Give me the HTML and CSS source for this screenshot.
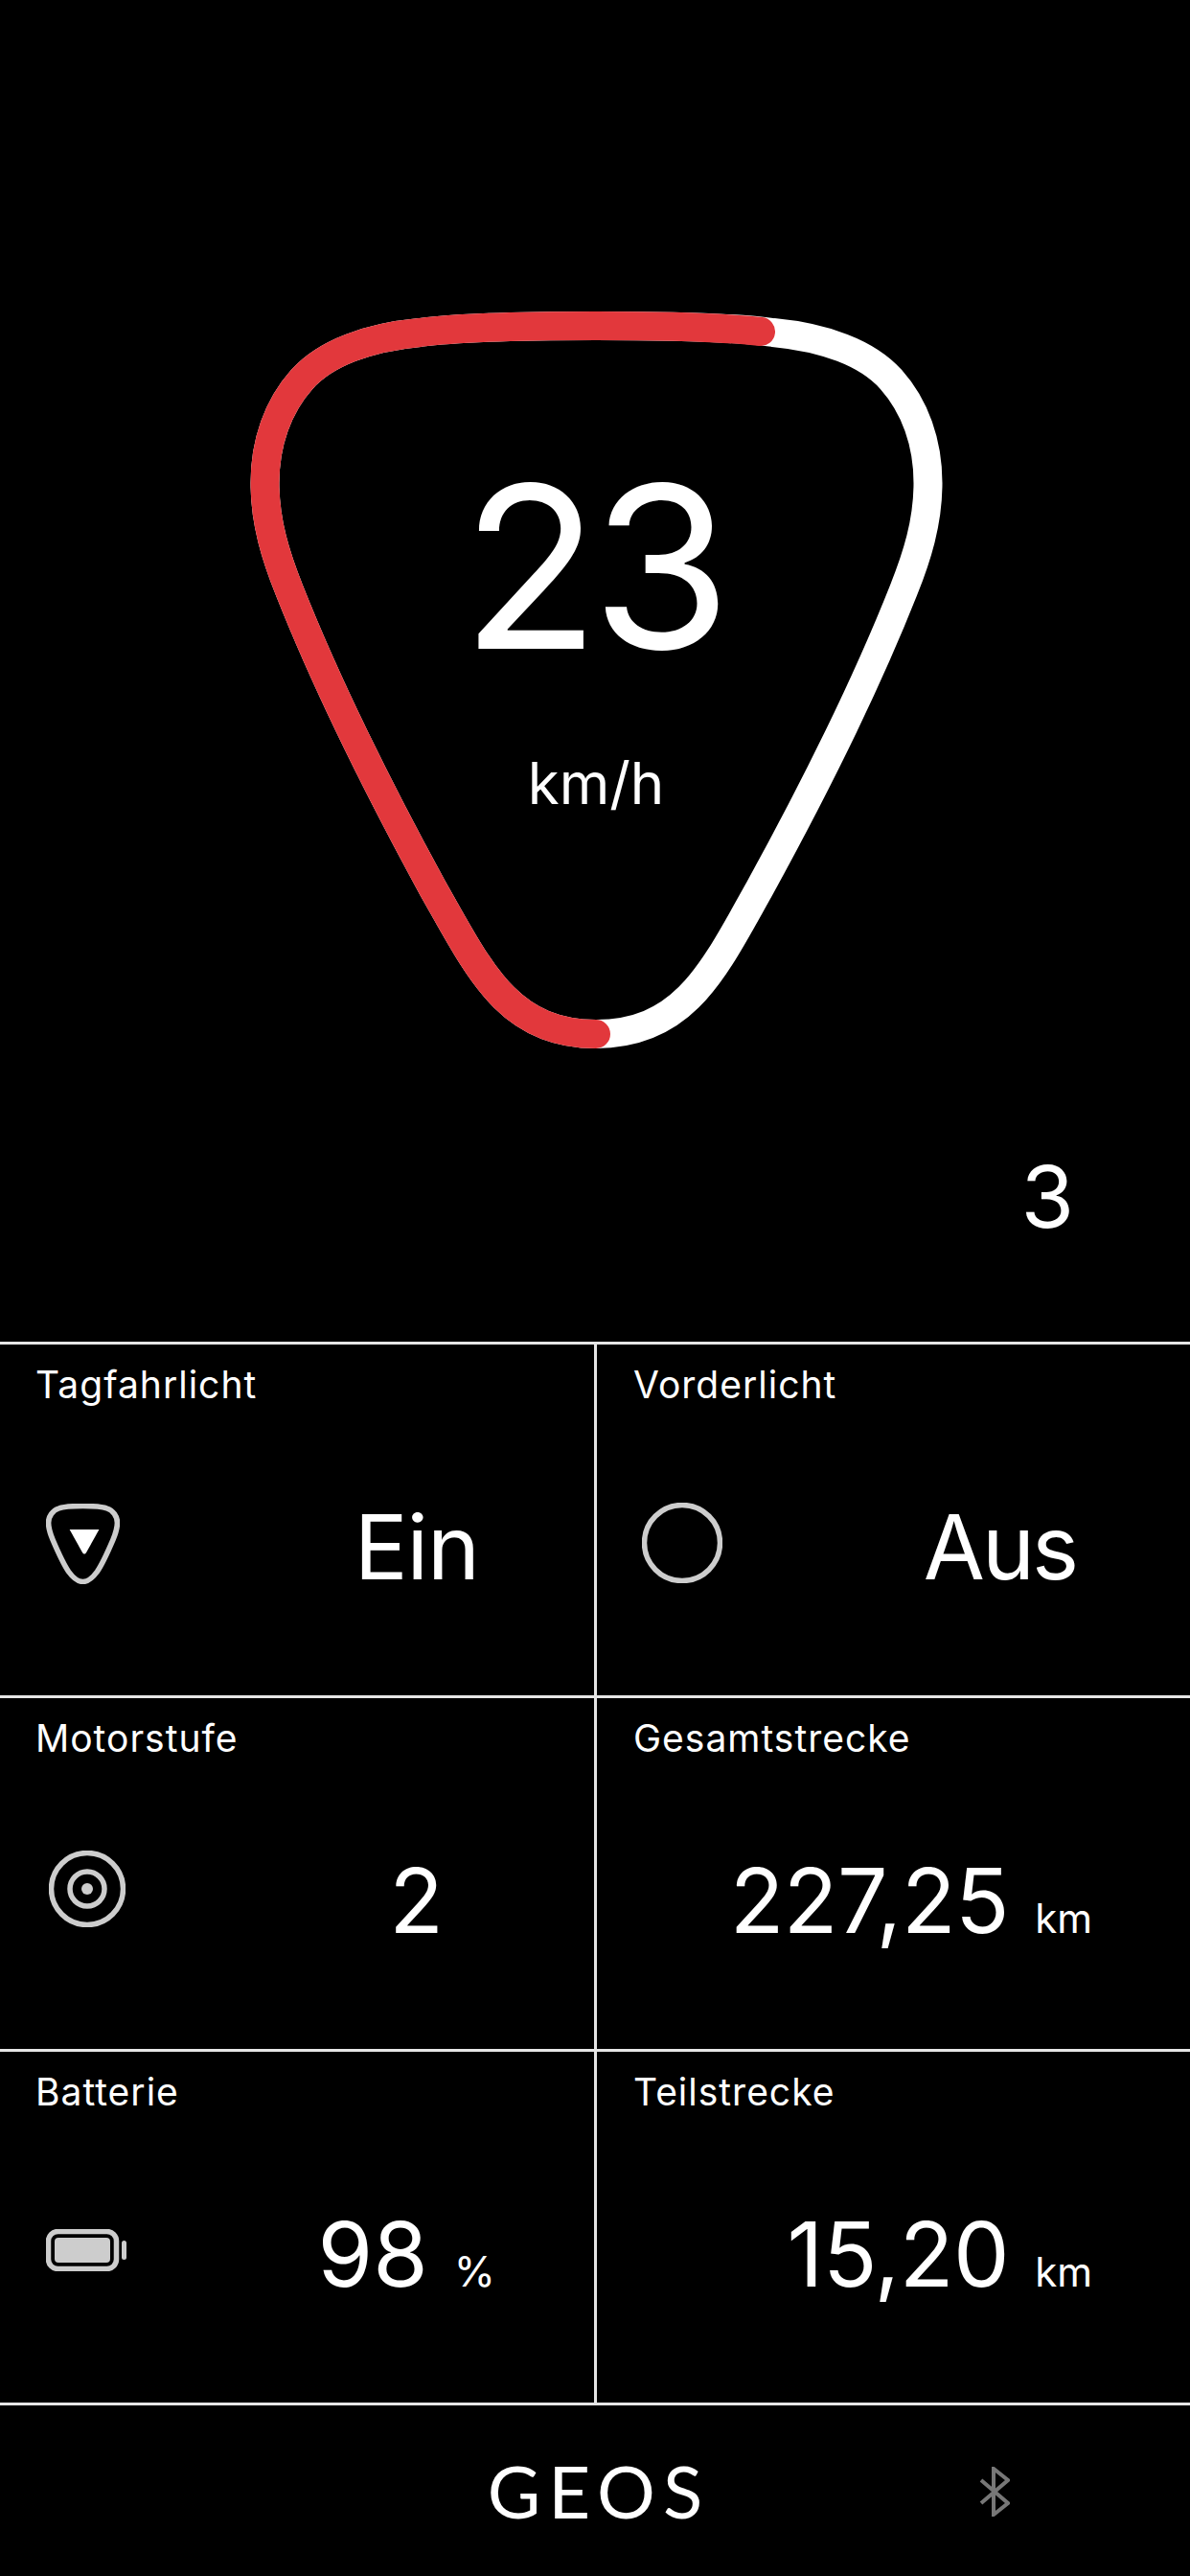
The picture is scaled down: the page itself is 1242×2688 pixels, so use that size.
FILE: index.html
```html
<!DOCTYPE html>
<html lang="de">
<head>
<meta charset="utf-8">
<title>GEOS</title>
<link rel="stylesheet" href="styles.css">
</head>
<body>
<main class="app">
  <section class="hero">
    <div class="gauge">
      <svg class="gauge-ring" viewBox="252 316 740 790" width="740" height="790" aria-hidden="true">
        <path class="ring-track" d="M622 340 C700 340 770 342 807 347 C860 352 905 368 930 396 C955 424 968.5 462 968.5 504 C968.5 545 957 581 943 616 C905 712 850 823 792.6 927.5 C745 1012 715 1079 622 1079 C530 1079 500 1012 452 927.5 C395 823 340 712 302 616 C288 581 276.5 545 276.5 504 C276.5 462 290 424 315 396 C340 368 385 352 438 347 C475 342 545 340 622 340 Z"/>
        <path class="ring-value" d="M622 1079 C530 1079 500 1012 452 927.5 C395 823 340 712 302 616 C288 581 276.5 545 276.5 504 C276.5 462 290 424 315 396 C340 368 385 352 438 347 C475 342 545 340 622 340 C690 340 750 341 794 346"/>
      </svg>
      <div class="speed">
        <div class="speed-value">23</div>
        <div class="speed-unit">km/h</div>
      </div>
    </div>
    <div class="gear">3</div>
  </section>

  <section class="grid">
    <article class="cell cell-left">
      <h2 class="label">Tagfahrlicht</h2>
      <svg class="icon icon-day" viewBox="0 0 75 84" width="77" height="84" preserveAspectRatio="none" aria-hidden="true">
        <path class="icon-line" d="M37.5 2.5 C50 2.5 57 3 62 5 C68 7 72.5 13 72.5 20 C72.5 27 70 33 68 38 C63 50 58 62 52 71 C47 78 43 81.5 37.5 81.5 C32 81.5 28 78 23 71 C17 62 12 50 7 38 C5 33 2.5 27 2.5 20 C2.5 13 7 7 13 5 C18 3 25 2.5 37.5 2.5 Z"/>
        <path class="icon-white" d="M24 27 H54 L41 51 Q39 54 37 51 Z"/>
      </svg>
      <div class="value value-ein">Ein</div>
    </article>
    <article class="cell">
      <h2 class="label">Vorderlicht</h2>
      <svg class="icon icon-front" viewBox="0 0 84 84" width="84" height="84" aria-hidden="true">
        <circle class="icon-line" cx="42" cy="42" r="39.5"/>
      </svg>
      <div class="value value-aus">Aus</div>
    </article>

    <article class="cell cell-left">
      <h2 class="label">Motorstufe</h2>
      <svg class="icon icon-motor" viewBox="0 0 80 80" width="80" height="80" aria-hidden="true">
        <circle class="icon-line" cx="40" cy="40" r="37.5"/>
        <circle class="icon-line" cx="40" cy="40" r="18"/>
        <circle class="icon-fill" cx="40" cy="40" r="6"/>
      </svg>
      <div class="value value-two">2</div>
    </article>
    <article class="cell">
      <h2 class="label">Gesamtstrecke</h2>
      <div class="value value-km">227,25<span class="unit">km</span></div>
    </article>

    <article class="cell cell-left">
      <h2 class="label">Batterie</h2>
      <svg class="icon icon-battery" viewBox="0 0 84 44" width="84" height="44" aria-hidden="true">
        <rect class="icon-line" x="2.5" y="2.5" width="71" height="39" rx="10"/>
        <rect class="icon-fill" x="9" y="9" width="58" height="26" rx="4"/>
        <rect class="icon-fill" x="79" y="12" width="5" height="20" rx="2.5"/>
      </svg>
      <div class="value value-pct">98<span class="unit unit-pct">%</span></div>
    </article>
    <article class="cell">
      <h2 class="label">Teilstrecke</h2>
      <div class="value value-km">15,20<span class="unit">km</span></div>
    </article>
  </section>

  <footer class="footer">
    <div class="logo">GEOS</div>
    <svg class="bluetooth" viewBox="0 0 32 52" width="32" height="52" aria-hidden="true">
      <path d="M2 14 L30 38 L15 50 V2 L30 14 L2 38"/>
    </svg>
  </footer>
</main>
</body>
</html>
```
FILE: styles.css
```css
* { box-sizing: border-box; }
html, body { margin: 0; padding: 0; background: #000; }
body { width: 1242px; height: 2688px; overflow: hidden; color: #fff; font-family: Inter, "Liberation Sans", sans-serif; }
.app { display: flex; flex-direction: column; height: 2688px; }

.hero { height: 1400px; padding-top: 316px; display: flex; flex-direction: column; }
.gauge { position: relative; width: 740px; height: 790px; margin-left: 252px; }
.gauge-ring { display: block; }
.ring-track, .ring-value { fill: none; stroke-width: 30; }
.ring-track { stroke: #fff; }
.ring-value { stroke: #e2383c; stroke-linecap: round; }
.speed { position: absolute; left: 0; top: 0; width: 740px; display: flex; flex-direction: column; align-items: center; }
.speed-value { margin-top: 157px; margin-left: -7px; font-size: 236px; line-height: 236px; font-weight: 370; letter-spacing: -8px; }
.speed-unit { margin-top: 73px; font-size: 60px; line-height: 70px; font-weight: 400; }
.gear { margin-top: 93px; padding-right: 121px; text-align: right; font-size: 90px; line-height: 100px; font-weight: 400; }

.grid { display: grid; grid-template-columns: 623px 1fr; grid-auto-rows: 369px; border-top: 3px solid #e6e6e6; height: 1110px; }
.cell { position: relative; border-bottom: 3px solid #e6e6e6; display: flex; align-items: flex-start; }
.cell-left { border-right: 3px solid #e6e6e6; }
.label { position: absolute; left: 38px; top: 18px; margin: 0; font-size: 39px; line-height: 48px; font-weight: 400; letter-spacing: 1px; }
.cell-left .label { left: 37px; }

.icon { position: absolute; display: block; }
.icon-line { fill: none; stroke: #cdcdcd; stroke-width: 5.5; }
.icon-fill { fill: #cdcdcd; }
.icon-white { fill: #fff; }
.icon-day { left: 48px; top: 166px; }
.icon-front { left: 47px; top: 165px; }
.icon-motor { left: 51px; top: 159px; }
.icon-battery { left: 48px; top: 185px; }

.value { position: absolute; right: 0; top: 155px; font-size: 93px; line-height: 112px; font-weight: 370; letter-spacing: -1px; white-space: nowrap; }
.value-ein { right: 120px; }
.value-aus { right: 119px; letter-spacing: -3px; }
.value-two { right: 158px; }
.value-km { right: 102px; letter-spacing: -0.5px; }
.value-pct { right: 103px; letter-spacing: 0; }
.unit { margin-left: 27px; font-size: 42px; font-weight: 400; letter-spacing: 0; }
.unit-pct { margin-left: 27px; font-size: 44px; }

.footer { flex: 1; display: flex; align-items: center; justify-content: center; position: relative; }
.logo { margin-left: 8px; font-family: Lato, sans-serif; font-weight: 400; font-size: 76px; line-height: 90px; letter-spacing: 8px; }
.bluetooth { position: absolute; right: 188px; top: 64px; }
.bluetooth path { fill: none; stroke: #777; stroke-width: 4; }
```
